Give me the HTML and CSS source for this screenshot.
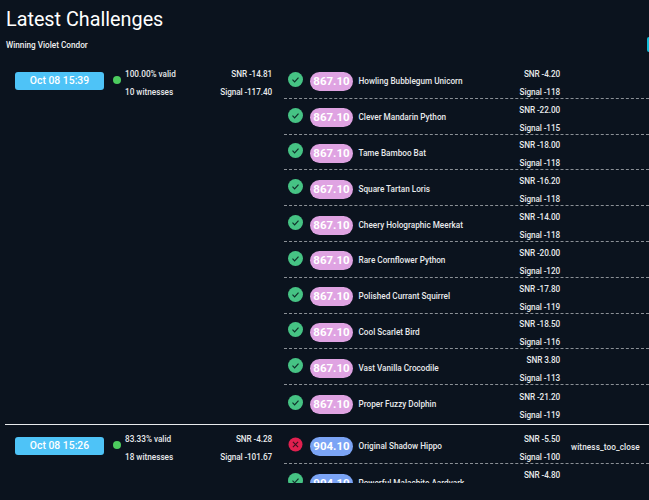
FILE: index.html
```html
<!DOCTYPE html>
<html lang="en">
<head>
<meta charset="utf-8">
<title>Latest Challenges</title>
<link rel="stylesheet" href="styles.css">
</head>
<body>
<svg class="defs" width="0" height="0" aria-hidden="true">
  <symbol id="ok" viewBox="0 0 15 15"><circle cx="7.5" cy="7.5" r="7.5" fill="#46c384"/><path d="M4.5 7.7l2.1 2.1L10.5 5.7" fill="none" stroke="#10302a" stroke-width="1.2"/></symbol>
  <symbol id="bad" viewBox="0 0 15 15"><circle cx="7.5" cy="7.5" r="7" fill="#e0204f"/><path d="M4.9 4.9l5.2 5.2M10.1 4.9l-5.2 5.2" fill="none" stroke="#3a1020" stroke-width="1.1"/></symbol>
</svg>
<header class="head">
  <h1 class="title">Latest Challenges</h1>
  <div class="sub-row">
    <span class="winner">Winning Violet Condor</span>
    <span class="tab"></span>
  </div>
</header>
<main class="list">
  <section class="group">
    <div class="summary">
      <span class="date">Oct 08 15:39</span>
      <span class="dot"></span>
      <div class="pair left"><span>100.00% valid</span><span>10 witnesses</span></div>
      <div class="pair right"><span>SNR -14.81</span><span>Signal -117.40</span></div>
    </div>
    <div class="rows">
      <div class="row"><svg class="icon"><use href="#ok"/></svg><span class="freq purple">867.10</span><span class="name">Howling Bubblegum Unicorn</span><div class="pair right"><span>SNR -4.20</span><span>Signal -118</span></div><span class="reason"></span></div>
      <div class="row"><svg class="icon"><use href="#ok"/></svg><span class="freq purple">867.10</span><span class="name">Clever Mandarin Python</span><div class="pair right"><span>SNR -22.00</span><span>Signal -115</span></div><span class="reason"></span></div>
      <div class="row"><svg class="icon"><use href="#ok"/></svg><span class="freq purple">867.10</span><span class="name">Tame Bamboo Bat</span><div class="pair right"><span>SNR -18.00</span><span>Signal -118</span></div><span class="reason"></span></div>
      <div class="row"><svg class="icon"><use href="#ok"/></svg><span class="freq purple">867.10</span><span class="name">Square Tartan Loris</span><div class="pair right"><span>SNR -16.20</span><span>Signal -118</span></div><span class="reason"></span></div>
      <div class="row"><svg class="icon"><use href="#ok"/></svg><span class="freq purple">867.10</span><span class="name">Cheery Holographic Meerkat</span><div class="pair right"><span>SNR -14.00</span><span>Signal -118</span></div><span class="reason"></span></div>
      <div class="row"><svg class="icon"><use href="#ok"/></svg><span class="freq purple">867.10</span><span class="name">Rare Cornflower Python</span><div class="pair right"><span>SNR -20.00</span><span>Signal -120</span></div><span class="reason"></span></div>
      <div class="row"><svg class="icon"><use href="#ok"/></svg><span class="freq purple">867.10</span><span class="name">Polished Currant Squirrel</span><div class="pair right"><span>SNR -17.80</span><span>Signal -119</span></div><span class="reason"></span></div>
      <div class="row"><svg class="icon"><use href="#ok"/></svg><span class="freq purple">867.10</span><span class="name">Cool Scarlet Bird</span><div class="pair right"><span>SNR -18.50</span><span>Signal -116</span></div><span class="reason"></span></div>
      <div class="row"><svg class="icon"><use href="#ok"/></svg><span class="freq purple">867.10</span><span class="name">Vast Vanilla Crocodile</span><div class="pair right"><span>SNR 3.80</span><span>Signal -113</span></div><span class="reason"></span></div>
      <div class="row"><svg class="icon"><use href="#ok"/></svg><span class="freq purple">867.10</span><span class="name">Proper Fuzzy Dolphin</span><div class="pair right"><span>SNR -21.20</span><span>Signal -119</span></div><span class="reason"></span></div>
    </div>
  </section>
  <section class="group">
    <div class="summary">
      <span class="date">Oct 08 15:26</span>
      <span class="dot"></span>
      <div class="pair left"><span>83.33% valid</span><span>18 witnesses</span></div>
      <div class="pair right"><span>SNR -4.28</span><span>Signal -101.67</span></div>
    </div>
    <div class="rows">
      <div class="row"><svg class="icon"><use href="#bad"/></svg><span class="freq blue">904.10</span><span class="name">Original Shadow Hippo</span><div class="pair right"><span>SNR -5.50</span><span>Signal -100</span></div><span class="reason">witness_too_close</span></div>
      <div class="row"><svg class="icon"><use href="#ok"/></svg><span class="freq blue">904.10</span><span class="name">Powerful Malachite Aardvark</span><div class="pair right"><span>SNR -4.80</span><span>Signal -118</span></div><span class="reason"></span></div>
    </div>
  </section>
</main>
</body>
</html>
```
FILE: styles.css
```css
* { box-sizing: border-box; }
html, body { margin: 0; height: 500px; overflow: hidden; }
body {
  background: #0b131e;
  color: #e8eaec;
  font-family: Roboto, "Liberation Sans", sans-serif;
  font-size: 8.2px;
  font-weight: 500;
}
.defs { display: block; }
.head { height: 63px; padding: 7px 0 0 6px; }
.title {
  margin: 0;
  height: 26px;
  font-size: 19.8px;
  line-height: 26px;
  font-weight: 400;
  color: #fff;
}
.sub-row { display: flex; justify-content: space-between; align-items: center; margin-top: 4px; height: 15px; }
.winner { color: #f0f0f0; }
.tab { width: 2px; height: 15px; background: #14bcd8; border-radius: 2px 0 0 2px; }
.list { height: 420px; overflow: hidden; padding-left: 5px; }
.group { display: flex; align-items: flex-start; }
.group + .group { border-top: 1px solid #e8eaec; margin-top: 3px; padding-top: 3px; }
.summary { width: 279px; flex: none; display: flex; align-items: flex-start; padding: 9px 12px 0 10px; }
.date {
  width: 89px;
  height: 18px;
  flex: none;
  border-radius: 3px;
  background: #4ec3f7;
  color: #fff;
  font-size: 10.4px;
  line-height: 18px;
  text-align: center;
}
.dot { width: 8px; height: 8px; flex: none; margin: 4px 4px 0 9px; border-radius: 50%; background: #4ccb5e; }
.pair { display: flex; flex-direction: column; gap: 9px; line-height: 9px; }
.summary .pair { margin-top: -2px; }
.row .pair { margin-top: 6px; }
.right { margin-left: auto; align-items: flex-end; letter-spacing: -0.1px; }
.rows { flex: 1; min-width: 0; }
.row {
  display: flex;
  align-items: center;
  height: 35.8px;
  border-bottom: 1px dashed #8b9096;
  padding-left: 4px;
}
.row:last-child { border-bottom: 0; }
.icon { width: 15px; height: 15px; flex: none; margin: -2px 7px 0 0; }
.freq {
  width: 43px;
  height: 19px;
  flex: none;
  border-radius: 10px;
  color: #fff;
  font-size: 11.5px;
  font-weight: 700;
  line-height: 19px;
  text-align: center;
  margin-top: 3px;
}
.purple { background: #dfa3e2; }
.blue { background: #7ba4f5; }
.name { flex: 1; min-width: 0; margin: 2px 0 0 5.5px; white-space: nowrap; }
.reason { width: 78px; flex: none; margin: 3px 0 0 11px; white-space: nowrap; letter-spacing: 0.1px; }
```
